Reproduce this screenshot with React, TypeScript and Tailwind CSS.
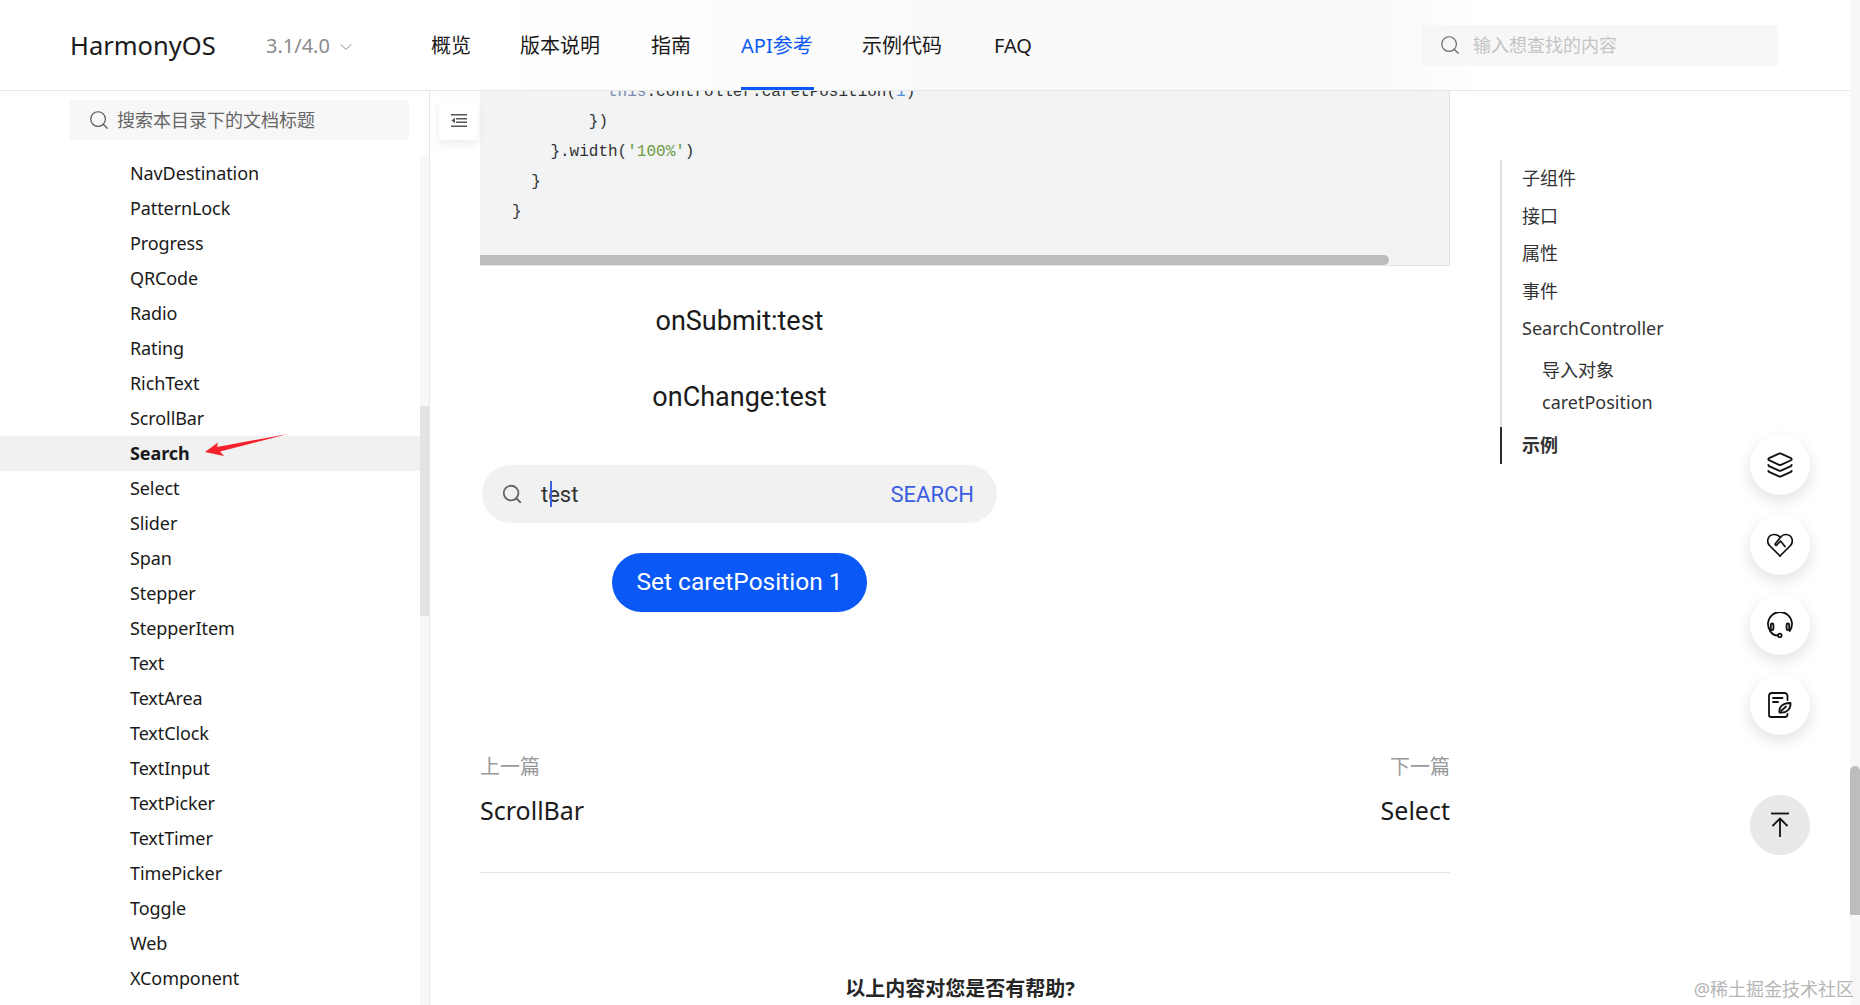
import { ChevronDown, Layers, Search } from "lucide-react";

const font = "font-['Noto_Sans','Noto_Sans_CJK_SC',sans-serif]";

const navItems = [
  { label: "概览", className: "w-[89px]" },
  { label: "版本说明", className: "w-[131px]" },
  { label: "指南", className: "w-[90px]" },
  { label: "API参考", className: "w-[121px] text-[#0a59f7]", active: true },
  { label: "示例代码", className: "w-[132px]" },
  { label: "FAQ", className: "w-[60px]" },
];

const sideItems = [
  "NavDestination",
  "PatternLock",
  "Progress",
  "QRCode",
  "Radio",
  "Rating",
  "RichText",
  "ScrollBar",
  "Search",
  "Select",
  "Slider",
  "Span",
  "Stepper",
  "StepperItem",
  "Text",
  "TextArea",
  "TextClock",
  "TextInput",
  "TextPicker",
  "TextTimer",
  "TimePicker",
  "Toggle",
  "Web",
  "XComponent",
];

const tocItems = ["子组件", "接口", "属性", "事件", "SearchController"];

function HeartIcon() {
  return (
    <svg width="26" height="24" viewBox="0 0 26 24" fill="none" stroke="#111" strokeWidth="1.7" strokeLinejoin="round" strokeLinecap="round">
      <path d="M13 23 3 13C-1.500 8.500 1 1.800 7 1.500c2.500-.1 4.800 1 6.500 2.800L8.500 10.500c-.8 1.200.3 2.300 1.300 1.500L13.500 8l4.500 5.500" />
      <path d="M13 23 23 13C27.500 8.500 25 1.800 19 1.500c-2-.1-4 .9-5.500 2.800" />
    </svg>
  );
}

function HeadsetIcon() {
  return (
    <svg width="26" height="26" viewBox="0 0 26 26" fill="none" stroke="#111" strokeWidth="1.8" strokeLinecap="round">
      <path d="M3.250 19A12 12 0 1 1 22.750 19" />
      <rect x="3.800" y="11.500" width="2.600" height="6.500" rx="1.300" />
      <rect x="19.600" y="11.500" width="2.600" height="6.500" rx="1.300" />
      <path d="M3.250 19c1.500 2.800 4 4.500 7.500 4.500" />
      <circle cx="12.800" cy="23.500" r="1.800" />
    </svg>
  );
}

function NoteIcon() {
  return (
    <svg width="24" height="26" viewBox="0 0 24 26" fill="none" stroke="#111" strokeWidth="1.8" strokeLinecap="round" strokeLinejoin="round">
      <path d="M19.500 8V4a3 3 0 0 0-3-3H4a3 3 0 0 0-3 3v19a2 2 0 0 0 2 2h14a2.500 2.500 0 0 0 2.500-2.500V22" />
      <path d="M5 6h9.500M5 10h5" />
      <path d="M11.500 20.500c-1-5.500 3-9.500 11-9.500 .5 6-4 10.500-11 9.500Z" />
      <path d="M13 19l5-4.500" />
    </svg>
  );
}

function BackTopIcon() {
  return (
    <svg width="20" height="26" viewBox="0 0 20 26" fill="none" stroke="#111" strokeWidth="1.8">
      <path d="M1 1.500h18" />
      <path d="M10 25V7M2.500 14 10 6.500 17.500 14" />
    </svg>
  );
}

function ToggleIcon() {
  return (
    <svg width="16" height="13" viewBox="0 0 16 13" fill="none" stroke="#555" strokeWidth="1.4">
      <path d="M0 .8h16M5 4.800h11M5 8.300h11M0 12.300h16" />
      <path d="M4 3.800 .5 6.500 4 9.200Z" fill="#555" stroke="none" />
    </svg>
  );
}

function RedArrow() {
  return (
    <svg width="84" height="22" viewBox="0 0 84 22" fill="#f5222d">
      <path d="M0 18 13 8.500 12 13 83 0 15 17.500 19 22Z" />
    </svg>
  );
}

function Header() {
  return (
    <header className="relative z-10 flex h-[91px] shrink-0 items-center border-b border-[#e6e8e8] bg-[linear-gradient(90deg,#ffffff_25%,#fafafa_50%,#fafafa_75%,#ffffff_80%)] pl-[70px]">
      <div className="w-[196px] text-[25.5px] text-[#1a1a1a]">HarmonyOS</div>
      <div className="mt-[2px] flex w-[165px] items-center text-[20px] text-[#8c8c8c]">
        3.1/4.0
        <ChevronDown className="ml-[6px] mt-[2px]" size={20} strokeWidth={1.2} />
      </div>
      <nav className="flex h-full w-[990px] text-[20px] text-[#1a1a1a]">
        {navItems.map((item) => (
          <div key={item.label} className={`relative flex h-full items-center pt-[2px] ${item.className}`}>
            {item.label}
            {item.active && <div className="absolute bottom-0 left-0 h-[3px] w-[73px] bg-[#0a59f7]" />}
          </div>
        ))}
      </nav>
      <div className="flex h-[41px] w-[357px] items-center bg-[#f7f7f7] pl-[18px] text-[18px] text-[#c4c4c4]">
        <Search className="mr-[12px] text-[#666]" size={22} strokeWidth={1.3} />
        输入想查找的内容
      </div>
    </header>
  );
}

function Sidebar() {
  return (
    <aside className="flex w-[430px] shrink-0 flex-col border-r border-[#e6e8e8] pt-[9px]">
      <div className="ml-[70px] flex h-[40px] w-[339px] shrink-0 items-center bg-[#f7f7f7] pl-[18px] text-[18px] text-[#666]">
        <Search className="mr-[7px] text-[#555]" size={22} strokeWidth={1.3} />
        搜索本目录下的文档标题
      </div>
      <div className="mt-[16px] flex min-h-0 flex-1">
        <ul className="flex-1 text-[18px] tracking-[-0.1px] text-[#1a1a1a]">
          {sideItems.map((item) => (
            <li
              key={item}
              className={`relative flex h-[35px] items-center pl-[130px] ${item === "Search" ? "bg-[#f1f1f1] font-bold" : ""}`}
            >
              {item}
              {item === "Search" && (
                <div className="absolute left-[205px] top-[-2px]">
                  <RedArrow />
                </div>
              )}
            </li>
          ))}
        </ul>
        <div className="w-[9px] shrink-0 bg-[#f7f7f7]">
          <div className="mt-[250px] h-[210px] w-full bg-[#e3e3e3]" />
        </div>
      </div>
    </aside>
  );
}

function CodeBlock() {
  return (
    <div className="relative -mt-[15px] h-[190px] w-[970px] overflow-hidden border-r border-b border-[#e3e5e5] bg-[#f1f3f5] pl-[32px] pt-[1px] font-['Liberation_Mono',monospace] text-[16px] leading-[30px] text-[#333]">
      <div className="whitespace-pre">
        {"          "}
        <span className="text-[#7a8bb0]">this</span>.controller.caretPosition(<span className="text-[#4a90d9]">1</span>)
      </div>
      <div className="whitespace-pre">{"        })"}</div>
      <div className="whitespace-pre">
        {"    }.width("}
        <span className="text-[#6a9a3a]">'100%'</span>)
      </div>
      <div className="whitespace-pre">{"  }"}</div>
      <div className="whitespace-pre">{"}"}</div>
      <div className="absolute bottom-0 left-0 h-[10px] w-[909px] rounded-r-[5px] bg-[#bdbdbd]" />
    </div>
  );
}

function DemoShot() {
  return (
    <div className="ml-[2px] flex w-[515px] flex-col items-center font-['Roboto',sans-serif] text-[#1a1a1a]">
      <div className="mt-[36px] text-[27px] leading-[38px]">onSubmit:test</div>
      <div className="mt-[38px] text-[27px] leading-[38px]">onChange:test</div>
      <div className="mt-[49px] flex h-[58px] w-full items-center rounded-full bg-[#f1f1f1] pl-[19px] pr-[23px]">
        <Search className="text-[#666]" size={22} strokeWidth={2} />
        <div className="relative ml-[18px] flex-1 text-[22px] text-[#333]">
          test
          <div className="absolute left-[9px] top-[3px] h-[26px] w-[2px] bg-[#3b5fe0]" />
        </div>
        <div className="text-[22px] text-[#3b5fe0]">SEARCH</div>
      </div>
      <div className="mt-[30px] flex h-[59px] w-[255px] items-center justify-center rounded-full bg-[#0a59f7] text-[24.5px] text-white">
        Set caretPosition 1
      </div>
    </div>
  );
}

function PrevNext() {
  return (
    <div className="mt-[141px] flex h-[120px] w-[970px] justify-between border-b border-[#e6e8e8]">
      <div>
        <div className="text-[20px] leading-[28px] text-[#999]">上一篇</div>
        <div className="mt-[11px] text-[25px] leading-[36px] text-[#1a1a1a]">ScrollBar</div>
      </div>
      <div className="text-right">
        <div className="text-[20px] leading-[28px] text-[#999]">下一篇</div>
        <div className="mt-[11px] text-[25px] leading-[36px] text-[#1a1a1a]">Select</div>
      </div>
    </div>
  );
}

function Toc() {
  return (
    <aside className="ml-[50px] pt-[69px]">
      <div className="w-[260px] border-l-2 border-[#dfdfdf] text-[18px] text-[#333]">
        {tocItems.map((item) => (
          <div key={item} className="flex h-[37.5px] items-center pl-[20px]">
            {item}
          </div>
        ))}
        <div className="mt-[6px] flex h-[33px] items-center pl-[40px]">导入对象</div>
        <div className="flex h-[32px] items-center pl-[40px]">caretPosition</div>
        <div className="-ml-[2px] mt-[8px] flex h-[37px] items-center border-l-2 border-[#2b2b2b] pl-[20px] font-bold">
          示例
        </div>
      </div>
    </aside>
  );
}

function FloatButtons() {
  const round = "flex h-[60px] w-[60px] items-center justify-center rounded-full bg-white shadow-[0_6px_16px_rgba(0,0,0,0.12)]";
  return (
    <div className="absolute left-[1750px] top-[435px] flex flex-col gap-[20px]">
      <div className={round}>
        <Layers size={28} strokeWidth={1.6} color="#111" />
      </div>
      <div className={round}>
        <HeartIcon />
      </div>
      <div className={round}>
        <HeadsetIcon />
      </div>
      <div className={round}>
        <NoteIcon />
      </div>
      <div className="mt-[40px] flex h-[60px] w-[60px] items-center justify-center rounded-full bg-[#e8e8e8]">
        <BackTopIcon />
      </div>
    </div>
  );
}

export default function App() {
  return (
    <div className={`relative flex h-screen overflow-hidden bg-white ${font}`}>
      <div className="flex min-w-0 flex-1 flex-col">
        <Header />
        <div className="flex min-h-0 flex-1">
          <Sidebar />
          <main className="w-[1020px] shrink-0 pl-[50px]">
            <CodeBlock />
            <DemoShot />
            <PrevNext />
            <div className="mt-[101px] w-[970px] pr-[10px] text-center text-[20px] font-bold leading-[30px] text-[#262626]">
              以上内容对您是否有帮助?
            </div>
          </main>
          <Toc />
        </div>
      </div>
      <div className="w-[10px] shrink-0 bg-[#f7f7f7]">
        <div className="mt-[766px] h-[149px] w-full rounded-t-[5px] bg-[#bdbdbd]" />
      </div>
      <div className="absolute left-[439px] top-[100px] flex h-[40px] w-[39px] items-center justify-center rounded-[4px] bg-white shadow-[0_4px_10px_rgba(0,0,0,0.08)]">
        <ToggleIcon />
      </div>
      <FloatButtons />
      <div className="absolute bottom-[2px] right-[6px] text-[18px] text-[#b5b5b5]">@稀土掘金技术社区</div>
    </div>
  );
}
